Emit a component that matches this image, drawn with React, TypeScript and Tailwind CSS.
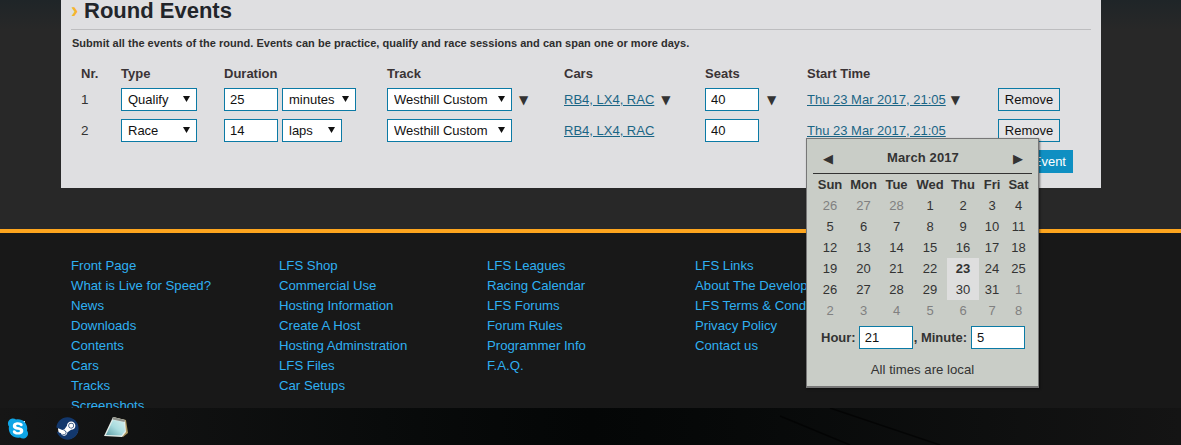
import React from "react";
import { FaSkype, FaSteam } from "react-icons/fa";

const ff = "font-['Liberation_Sans',Arial,sans-serif]";
const field = "h-[23px] border border-[#0b7aa5] bg-white text-[13px] text-[#111] outline-none";

function Tri() {
  return <span className="text-[12px] leading-none text-[#333] font-['DejaVu_Sans',sans-serif]">▼</span>;
}

function Sel({ w, value, options }: { w: string; value: string; options: string[] }) {
  return (
    <span className={`relative block ${w}`}>
      <select defaultValue={value} className={`${field} w-full appearance-none pl-[6px] ${ff}`}>
        {options.map((o) => (
          <option key={o}>{o}</option>
        ))}
      </select>
      <svg width="7" height="6" viewBox="0 0 7 6" className="pointer-events-none absolute right-[7px] top-[8px]">
        <path d="M0 0H7L3.5 6Z" fill="#111" />
      </svg>
    </span>
  );
}

function Row({ n, type, dur, unit, open }: { n: number; type: string; dur: string; unit: string; open: boolean }) {
  const link = "text-[#1a6585] underline text-[13px]";
  return (
    <div className="grid grid-cols-[40px_103px_163px_177px_141px_102px_191px_62px] h-[23px] items-center text-[13.5px] text-[#333]">
      <span className="pt-[2px]">{n}</span>
      <Sel w="w-[76px]" value={type} options={["Qualify", "Race"]} />
      <div className="flex gap-[4px]">
        <input readOnly value={dur} className={`${field} w-[54px] pl-[5px]`} />
        <Sel w={unit === "minutes" ? "w-[74px]" : "w-[60px]"} value={unit} options={["minutes", "laps"]} />
      </div>
      <div className="flex items-center gap-[7px]">
        <Sel w="w-[125px]" value="Westhill Custom" options={["Westhill Custom"]} />
        {open && <Tri />}
      </div>
      <div className="flex items-center gap-[7px]">
        <a className={link}>RB4, LX4, RAC</a>
        {open && <Tri />}
      </div>
      <div className="flex items-center gap-[8px]">
        <input readOnly value="40" className={`${field} w-[54px] pl-[5px]`} />
        {open && <Tri />}
      </div>
      <div className="flex items-center gap-[5px]">
        <a className={link}>Thu 23 Mar 2017, 21:05</a>
        {open && <Tri />}
      </div>
      <button className="h-[23px] w-[62px] border border-[#0b7aa5] bg-[#e4e4e6] text-[13px] text-[#111]">Remove</button>
    </div>
  );
}

const footer = [
  ["Front Page", "What is Live for Speed?", "News", "Downloads", "Contents", "Cars", "Tracks", "Screenshots"],
  ["LFS Shop", "Commercial Use", "Hosting Information", "Create A Host", "Hosting Adminstration", "LFS Files", "Car Setups"],
  ["LFS Leagues", "Racing Calendar", "LFS Forums", "Forum Rules", "Programmer Info", "F.A.Q."],
  ["LFS Links", "About The Developers", "LFS Terms & Conditions", "Privacy Policy", "Contact us"],
];

const days = [
  ["26", "27", "28", "1", "2", "3", "4"],
  ["5", "6", "7", "8", "9", "10", "11"],
  ["12", "13", "14", "15", "16", "17", "18"],
  ["19", "20", "21", "22", "23", "24", "25"],
  ["26", "27", "28", "29", "30", "31", "1"],
  ["2", "3", "4", "5", "6", "7", "8"],
];
const calCols = "grid grid-cols-[34px_33px_33px_34px_32px_26px_27px]";

function Calendar() {
  return (
    <div className="absolute left-[806px] top-[138px] w-[233px] h-[250px] border border-[#777] border-b-[2px] bg-[#c9cdc7] px-[6px] text-[#333] text-[13px] shadow-[1px_1px_2px_rgba(0,0,0,0.5)]">
      <div className="flex h-[35px] items-center justify-between border-b border-[#333] pl-[10px] pr-[9px] pt-[4px] font-['DejaVu_Sans',sans-serif] text-[13px]">
        <span className="leading-none">◀</span>
        <span className={`${ff} font-bold text-[13px] tracking-[0.1px]`}>March 2017</span>
        <span className="leading-none">▶</span>
      </div>
      <div className={`${calCols} h-[21px] items-center text-center font-bold`}>
        {["Sun", "Mon", "Tue", "Wed", "Thu", "Fri", "Sat"].map((d) => (
          <span key={d}>{d}</span>
        ))}
      </div>
      {days.map((r, i) => (
        <div key={i} className={`${calCols} h-[21px] items-center text-center`}>
          {r.map((d, j) => {
            const other = (i === 0 && j < 3) || i === 5 || (i === 4 && j === 6);
            const hi = j === 4 && (i === 3 || i === 4);
            return (
              <span
                key={j}
                className={`h-[21px] leading-[21px] ${other ? "text-[#808080]" : ""} ${hi ? "bg-[#dedede]" : ""} ${i === 3 && j === 4 ? "font-bold" : ""}`}
              >
                {d}
              </span>
            );
          })}
        </div>
      ))}
      <div className="mt-[5px] flex items-center pl-[8px] font-bold">
        <span>Hour:</span>
        <input readOnly value="21" className={`${field} ml-[3px] w-[54px] pl-[5px] font-normal`} />
        <span className="ml-[1px]">, Minute:</span>
        <input readOnly value="5" className={`${field} ml-[4px] w-[54px] pl-[5px] font-normal`} />
      </div>
      <div className="mt-[11px] text-center text-[13.2px]">All times are local</div>
    </div>
  );
}

function Notepad() {
  return (
    <svg width="25" height="21" viewBox="0 0 25 21" className="block">
      <defs>
        <linearGradient id="np" x1="0" y1="1" x2="1" y2="0">
          <stop offset="0" stopColor="#5f9ea6" />
          <stop offset="0.5" stopColor="#a9dcdf" />
          <stop offset="1" stopColor="#d5efee" />
        </linearGradient>
      </defs>
      <path d="M10 0 L23 3 L25 16 L20 20 L19 19 Z" fill="#a8945e" />
      <path d="M10 0 L22 3 L23 15 L19 20 L1 19 Z" fill="#e6eeea" />
      <path d="M10 3 L21 5 L22 14 L18.5 18.5 L3 18 Z" fill="url(#np)" />
      <path d="M10 0 L22 3 L21.5 5 L9.5 2.5 Z" fill="#8d908a" />
    </svg>
  );
}

export default function App() {
  return (
    <div className={`relative h-[445px] w-[1181px] overflow-hidden bg-[#282828] ${ff}`}>
      <div className="h-[229px] bg-[linear-gradient(#1f2528,#282828_30px)]">
        <main className="ml-[61px] h-[188px] w-[1040px] bg-[#dfdfe1] px-[10px] text-[#333]">
          <div className="flex h-[29px] items-start">
            <span className="w-[13px] text-[22px] font-bold leading-[21px] text-[#f5b52e]">›</span>
            <h1 className="text-[22px] font-bold leading-[22px] text-[#22252a]">Round Events</h1>
          </div>
          <div className="h-[1px] bg-[#bdbdbf]" />
          <p className="mt-[7px] pl-[1px] text-[11px] font-bold leading-[13px] tracking-[0.03px] text-[#2e2e2e]">
            Submit all the events of the round. Events can be practice, qualify and race sessions and can span one or more days.
          </p>
          <div className="pl-[10px] pt-[14px]">
            <div className="mb-[8px] grid h-[16px] grid-cols-[40px_103px_163px_177px_141px_102px_191px] items-center text-[13px] font-bold text-[#3a3335]">
              {["Nr.", "Type", "Duration", "Track", "Cars", "Seats", "Start Time"].map((h) => (
                <span key={h}>{h}</span>
              ))}
            </div>
            <div className="flex flex-col gap-[8px]">
              <Row n={1} type="Qualify" dur="25" unit="minutes" open />
              <Row n={2} type="Race" dur="14" unit="laps" open={false} />
            </div>
            <div className="mt-[8px] flex justify-end pr-[18px]">
              <button className="h-[23px] bg-[#0f8fc2] px-[7px] text-[13px] text-white">Add Event</button>
            </div>
          </div>
        </main>
      </div>
      <div className="h-[4px] bg-[#fda51e]" />
      <footer className="flex h-[175px] overflow-hidden bg-[#181818] pl-[71px] pt-[23px]">
        {footer.map((c, i) => (
          <ul key={i} className="w-[208px] shrink-0">
            {c.map((l) => (
              <li key={l} className="h-[20px] text-[13.2px] leading-[20px] text-[#2fb0f2]">
                {l}
              </li>
            ))}
          </ul>
        ))}
      </footer>
      <div className="relative flex h-[37px] items-start bg-gradient-to-r from-[#161616] via-[#040606] to-[#141414] pl-[7px] pt-[9px]">
        <svg width="1181" height="37" viewBox="0 0 1181 37" className="pointer-events-none absolute left-0 top-0">
          <path d="M830 0L940 37M780 8L850 37" stroke="#000" strokeWidth="1.5" fill="none" opacity="0.6" />
        </svg>
        <span className="relative flex h-[22px] w-[22px] items-center justify-center">
          <span className="absolute h-[14px] w-[14px] bg-white" />
          <FaSkype className="relative text-[23px] text-[#0fa5e6]" />
        </span>
        <span className="relative ml-[27px] flex h-[23px] w-[23px] items-center justify-center">
          <span className="absolute h-[20px] w-[20px] rounded-full bg-white" />
          <FaSteam className="relative text-[23px] text-[#12376c]" />
        </span>
        <span className="relative ml-[24px]">
          <Notepad />
        </span>
      </div>
      <Calendar />
    </div>
  );
}
